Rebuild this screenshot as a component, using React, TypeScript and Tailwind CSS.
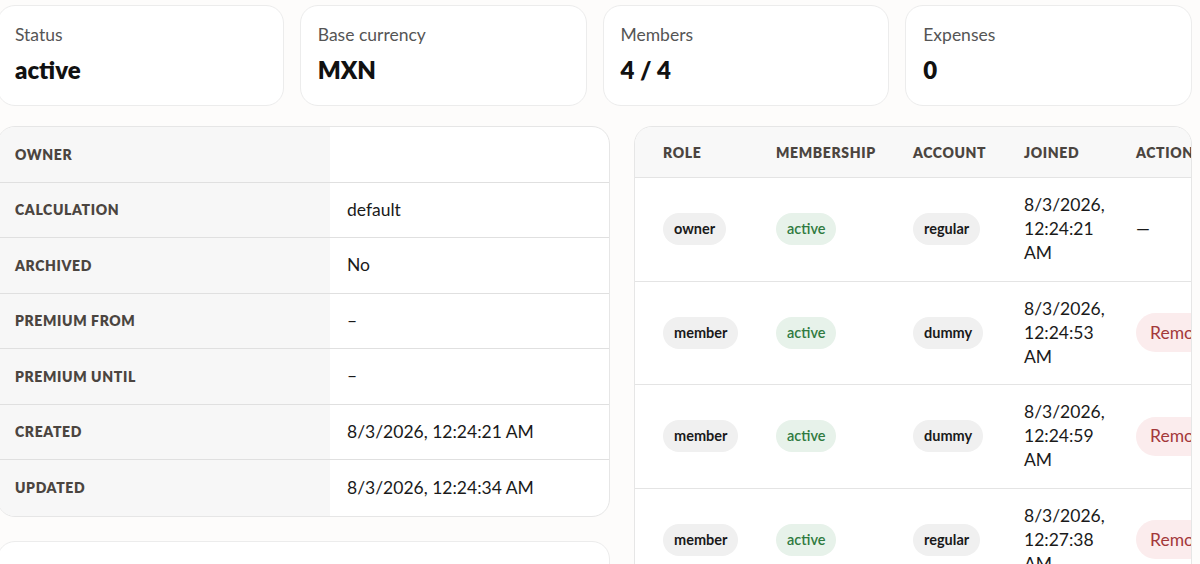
import React from "react";

const stats = [
  { label: "Status", value: "active" },
  { label: "Base currency", value: "MXN" },
  { label: "Members", value: "4 / 4" },
  { label: "Expenses", value: "0" },
];

const details = [
  { label: "Owner", value: "" },
  { label: "Calculation", value: "default" },
  { label: "Archived", value: "No" },
  { label: "Premium from", value: "–" },
  { label: "Premium until", value: "–" },
  { label: "Created", value: "8/3/2026, 12:24:21 AM" },
  { label: "Updated", value: "8/3/2026, 12:24:34 AM" },
];

const members = [
  { role: "owner", account: "regular", date: "8/3/2026,", time: "12:24:21", ampm: "AM", owner: true },
  { role: "member", account: "dummy", date: "8/3/2026,", time: "12:24:53", ampm: "AM", owner: false },
  { role: "member", account: "dummy", date: "8/3/2026,", time: "12:24:59", ampm: "AM", owner: false },
  { role: "member", account: "regular", date: "8/3/2026,", time: "12:27:38", ampm: "AM", owner: false },
];

function GrayPill({ children }: { children: React.ReactNode }) {
  return (
    <span className="inline-flex h-[32px] items-center rounded-full bg-[#f0f0f0] px-[11px] text-[14.5px] font-bold text-[#1a1a1a]">
      {children}
    </span>
  );
}

export default function App() {
  return (
    <div
      className="h-[564px] w-[1200px] overflow-hidden bg-[#fdfcfb] text-[#1a1a1a]"
      style={{ fontFamily: "Lato, 'Noto Sans', sans-serif" }}
    >
      <div className="ml-[-3px] w-[1195px] pt-[5px]">
        <div className="grid grid-cols-4 gap-4">
          {stats.map((s) => (
            <div
              key={s.label}
              className="h-[101px] rounded-[18px] border border-[#ececec] bg-white px-[17px] pt-[17px]"
            >
              <div className="text-[17.5px] leading-6 text-[#555]">{s.label}</div>
              <div className="mt-[9px] text-[24px] font-extrabold leading-7 text-[#111]">{s.value}</div>
            </div>
          ))}
        </div>

        <div className="mt-[20px] grid grid-cols-[613px_558px] gap-6">
          <div className="flex flex-col">
            <div className="overflow-hidden rounded-[18px] border border-[#e6e6e6] bg-white">
              {details.map((d, i) => (
                <div
                  key={d.label}
                  className={`flex h-[55.5px] items-stretch ${i < details.length - 1 ? "border-b border-[#e0e0e0]" : ""}`}
                >
                  <div className="flex w-[332px] shrink-0 items-center bg-[#f7f7f7] pl-[17px] text-[14px] font-extrabold uppercase tracking-[0.045em] text-[#4b4540]">
                    {d.label}
                  </div>
                  <div className="flex items-center pl-[17px] text-[17.5px] text-[#1a1a1a]">{d.value}</div>
                </div>
              ))}
            </div>
            <div className="mt-[24px] h-[120px] rounded-[18px] border border-[#ececec] bg-white" />
          </div>

          <div className="h-[520px] overflow-hidden rounded-[18px] border border-[#e6e6e6] bg-white">
            <div className="flex h-[51px] items-center border-b border-[#e4e4e4] bg-[#f8f8f8] pl-[28px] text-[14px] font-extrabold uppercase tracking-[0.045em] text-[#4b4540] whitespace-nowrap">
              <div className="w-[113px] shrink-0">Role</div>
              <div className="w-[137px] shrink-0">Membership</div>
              <div className="w-[111px] shrink-0">Account</div>
              <div className="w-[112px] shrink-0">Joined</div>
              <div className="w-[120px] shrink-0">Actions</div>
            </div>
            {members.map((m, i) => (
              <div
                key={i}
                className="flex h-[103.5px] items-center border-b border-[#e4e4e4] pl-[28px] whitespace-nowrap"
              >
                <div className="w-[113px] shrink-0">
                  <GrayPill>{m.role}</GrayPill>
                </div>
                <div className="w-[137px] shrink-0">
                  <span className="inline-flex h-[32px] items-center rounded-full bg-[#e7f2ea] px-[11px] text-[14.5px] font-semibold text-[#2f7a40]">
                    active
                  </span>
                </div>
                <div className="w-[111px] shrink-0">
                  <GrayPill>{m.account}</GrayPill>
                </div>
                <div className="w-[112px] shrink-0 text-[17.5px] leading-6 text-[#1a1a1a]">
                  <div>{m.date}</div>
                  <div>{m.time}</div>
                  <div>{m.ampm}</div>
                </div>
                <div className="w-[120px] shrink-0">
                  {m.owner ? (
                    <span className="text-[17.5px] text-[#1a1a1a]">—</span>
                  ) : (
                    <span className="inline-flex h-[39px] items-center rounded-full bg-[#fbeced] px-[14px] text-[17.5px] text-[#a3383b]">
                      Remove
                    </span>
                  )}
                </div>
              </div>
            ))}
          </div>
        </div>
      </div>
    </div>
  );
}
